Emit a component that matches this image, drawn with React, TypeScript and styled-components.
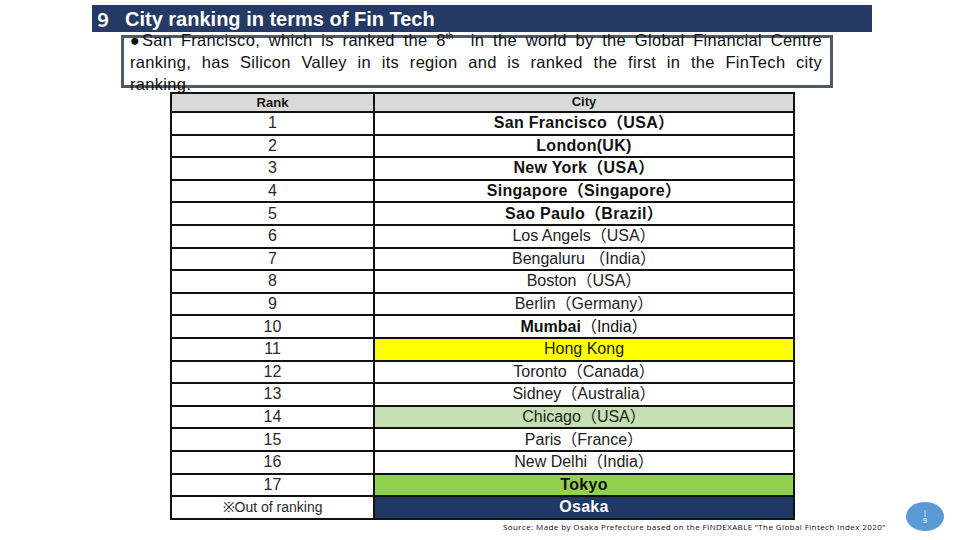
import styled, { createGlobalStyle } from "styled-components";

const GlobalStyle = createGlobalStyle`
  body {
    margin: 0;
    background: #ffffff;
    font-family: "Liberation Sans", Arial, "Noto Sans CJK JP", sans-serif;
  }
`;

type City = {
  rank: string;
  name: string;
  country?: string;
  tone?: "bold" | "mixed" | "light";
  bg?: string;
  color?: string;
};

const cities: City[] = [
  { rank: "1", name: "San Francisco", country: "（USA）", tone: "bold" },
  { rank: "2", name: "London(UK)", tone: "bold" },
  { rank: "3", name: "New York", country: "（USA）", tone: "bold" },
  { rank: "4", name: "Singapore", country: "（Singapore）", tone: "bold" },
  { rank: "5", name: "Sao Paulo", country: "（Brazil）", tone: "bold" },
  { rank: "6", name: "Los Angels", country: "（USA）", tone: "light" },
  { rank: "7", name: "Bengaluru ", country: "（India）", tone: "light" },
  { rank: "8", name: "Boston", country: "（USA）", tone: "light" },
  { rank: "9", name: "Berlin", country: "（Germany）", tone: "light" },
  { rank: "10", name: "Mumbai", country: "（India）", tone: "mixed" },
  { rank: "11", name: "Hong Kong", tone: "light", bg: "#ffff00" },
  { rank: "12", name: "Toronto", country: "（Canada）", tone: "light" },
  { rank: "13", name: "Sidney", country: "（Australia）", tone: "light" },
  { rank: "14", name: "Chicago", country: "（USA）", tone: "light", bg: "#c6e0b4" },
  { rank: "15", name: "Paris", country: "（France）", tone: "light" },
  { rank: "16", name: "New Delhi", country: "（India）", tone: "light" },
  { rank: "17", name: "Tokyo", tone: "bold", bg: "#92d050" },
  { rank: "※Out of ranking", name: "Osaka", tone: "bold", bg: "#1f3864", color: "#ffffff" },
];

export default function App() {
  return (
    <>
      <GlobalStyle />
      <Slide>
        <TitleBar>
          <TitleNum>９</TitleNum>
          <span>City ranking in terms of Fin Tech</span>
        </TitleBar>
        <NoteBox>
          <NoteText>
            <Bullet>●</Bullet>San Francisco, which is ranked the 8<sup>th</sup>&nbsp; in the world
            by the Global Financial Centre
            <br />
            ranking, has Silicon Valley in its region and is ranked the first in the FinTech city
            <br />
            ranking.
          </NoteText>
        </NoteBox>
        <RankTable>
          <colgroup>
            <col style={{ width: 203 }} />
            <col style={{ width: 420 }} />
          </colgroup>
          <thead>
            <tr>
              <HeadCell>Rank</HeadCell>
              <HeadCell $lift>City</HeadCell>
            </tr>
          </thead>
          <tbody>
            {cities.map((c) => (
              <tr key={c.rank}>
                <RankCell $small={c.rank.length > 2}>{c.rank}</RankCell>
                <CityCell $bg={c.bg} $color={c.color} $tone={c.tone ?? "light"}>
                  {c.tone === "mixed" ? (
                    <>
                      <strong>{c.name}</strong>
                      <Narrow>{c.country}</Narrow>
                    </>
                  ) : (
                    <>
                      {c.name}
                      {c.country}
                    </>
                  )}
                </CityCell>
              </tr>
            ))}
          </tbody>
        </RankTable>
        <Footer>
          <Source>
            Source: Made by Osaka Prefecture based on the FINDEXABLE “The Global Fintech Index 2020”
          </Source>
          <PageBadge>
            <span>|</span>
            <span>9</span>
          </PageBadge>
        </Footer>
      </Slide>
    </>
  );
}

const Slide = styled.div`
  width: 960px;
  height: 540px;
  position: relative;
  overflow: hidden;
  padding-top: 5px;
  box-sizing: border-box;
`;

const TitleBar = styled.div`
  margin-left: 92px;
  width: 780px;
  height: 27px;
  background: #243a64;
  color: #ffffff;
  font-weight: bold;
  font-size: 20px;
  display: flex;
  align-items: center;
  gap: 13px;
  padding-left: 2px;
  box-sizing: border-box;
  line-height: 1;
`;

const TitleNum = styled.span`
  font-family: "Noto Sans CJK JP", sans-serif;
  font-weight: bold;
  font-size: 18px;
`;

const NoteBox = styled.div`
  margin-left: 121px;
  margin-top: 3px;
  width: 712px;
  height: 53px;
  border: 3px solid #4e5a6a;
  box-sizing: border-box;
  padding: 0 8px 0 6px;
  overflow: visible;
`;

const NoteText = styled.p`
  margin: -9px 0 0;
  font-size: 16.5px;
  letter-spacing: 0.3px;
  line-height: 22px;
  text-align: justify;
  text-align-last: justify;
  color: #111;

  sup {
    font-size: 9px;
    line-height: 0;
    vertical-align: 7px;
    letter-spacing: 0;
  }
`;

const Bullet = styled.span`
  letter-spacing: 0;
  margin-right: -2px;
`;

const RankTable = styled.table`
  margin-left: 170px;
  margin-top: 4px;
  width: 623px;
  border-collapse: collapse;
  table-layout: fixed;
  border: 2px solid #111;
`;

const HeadCell = styled.th<{ $lift?: boolean }>`
  height: 17px;
  padding: 0;
  background: #d9d9d9;
  border: 2px solid #111;
  font-size: 13px;
  font-weight: bold;
  text-align: center;
  vertical-align: ${(p) => (p.$lift ? "top" : "bottom")};
  line-height: 16px;
  color: #111;
`;

const RankCell = styled.td<{ $small?: boolean }>`
  height: 20.6px;
  padding: 0;
  border: 2px solid #111;
  text-align: center;
  font-family: "Liberation Sans Narrow", "Liberation Sans", sans-serif;
  font-stretch: condensed;
  font-size: ${(p) => (p.$small ? "14px" : "16px")};
  color: #2a2a2a;
  line-height: 1;
`;

const CityCell = styled.td<{ $bg?: string; $color?: string; $tone: string }>`
  padding: 0;
  border: 2px solid #111;
  text-align: center;
  background: ${(p) => p.$bg ?? "#ffffff"};
  color: ${(p) => p.$color ?? "#111"};
  font-size: 16px;
  line-height: 1;
  letter-spacing: ${(p) => (p.$tone === "bold" ? "0.3px" : "0")};
  font-weight: ${(p) => (p.$tone === "bold" ? "bold" : "normal")};
  font-family: "Liberation Sans", "Noto Sans CJK JP", sans-serif;
  ${(p) => (p.$tone === "light" ? "color: #222;" : "")}
`;

const Narrow = styled.span`
  font-weight: normal;
  font-size: 16px;
`;

const Footer = styled.div`
  display: flex;
  align-items: flex-start;
  margin-top: 0;
  padding-left: 503px;
`;

const Source = styled.div`
  font-family: "Open Sans", sans-serif;
  font-size: 8px;
  letter-spacing: 0.4px;
  color: #111;
  margin-top: 1px;
  white-space: nowrap;
`;

const PageBadge = styled.div`
  position: absolute;
  left: 906px;
  top: 502px;
  width: 38px;
  height: 29px;
  border-radius: 50%;
  background: #5b9bd5;
  color: #ffffff;
  font-family: "Liberation Sans", sans-serif;
  font-size: 7px;
  display: flex;
  flex-direction: column;
  align-items: center;
  justify-content: center;
  line-height: 8px;
`;
